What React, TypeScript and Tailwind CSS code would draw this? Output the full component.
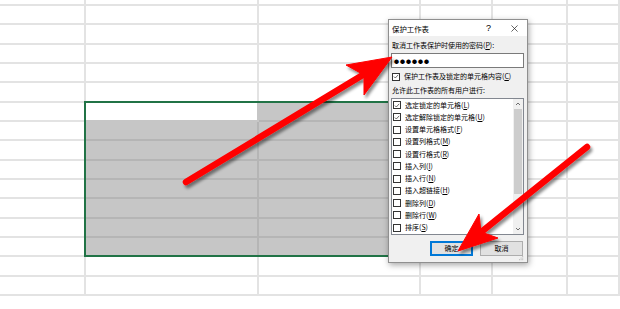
import React from "react";

const COL_W = ["w-[86px]", "w-[173px]", "w-[162px]", "w-[72px]", "w-[75px]", "flex-1"];

const OPTIONS: { label: string; k: string; on?: boolean }[] = [
  { label: "选定锁定的单元格", k: "L", on: true },
  { label: "选定解除锁定的单元格", k: "U", on: true },
  { label: "设置单元格格式", k: "F" },
  { label: "设置列格式", k: "M" },
  { label: "设置行格式", k: "R" },
  { label: "插入列", k: "I" },
  { label: "插入行", k: "N" },
  { label: "插入超链接", k: "H" },
  { label: "删除列", k: "D" },
  { label: "删除行", k: "W" },
  { label: "排序", k: "S" },
];

function Acc({ label, k, tail = "" }: { label: string; k: string; tail?: string }) {
  return (
    <span className="whitespace-nowrap">
      {label}(<span className="underline">{k}</span>){tail}
    </span>
  );
}

function Check({ on }: { on?: boolean }) {
  return (
    <span className="flex h-[8px] w-[8px] shrink-0 items-center justify-center border border-[#333] bg-white">
      {on && (
        <svg viewBox="0 0 8 8" className="h-[7px] w-[7px]">
          <path d="M1.2 4.1 L3.1 6 L6.9 1.8" fill="none" stroke="#222" strokeWidth="0.9" />
        </svg>
      )}
    </span>
  );
}

function Sheet() {
  const rows = Array.from({ length: 16 }, (_, r) => r);
  return (
    <div className="flex flex-col">
      {rows.map((r) => {
        const selRow = r >= 6 && r <= 13;
        return (
          <div key={r} className={`flex ${r === 0 ? "h-[6px]" : "h-[19.33px]"}`}>
            {COL_W.map((w, c) => {
              const sel = selRow && (c === 1 || c === 2);
              const active = sel && r === 6 && c === 1;
              let cls = "border-b-2 border-r-2 border-[#e3e3e3] bg-white";
              if (sel && !active) cls = "border-b-2 border-r-2 border-[#b5b5b5] bg-[#c6c6c6]";
              if (active) cls = "border-b-2 border-r-2 border-[#c6c6c6] bg-white";
              return <div key={c} className={`${w} shrink-0 ${cls}`} />;
            })}
          </div>
        );
      })}
    </div>
  );
}

function Dialog() {
  return (
    <div className="absolute left-[388px] top-[19px] flex h-[244px] w-[140px] flex-col border border-[#8f8f8f] bg-[#f0f0f0] font-['Noto_Sans_CJK_SC',sans-serif] text-[7px] leading-[9px] text-black shadow-[1px_2px_6px_rgba(0,0,0,0.35)]">
      {/* Title bar */}
      <div className="flex h-[18px] items-center bg-white pl-[3px] pr-[9px] text-[7.4px]">
        <span>保护工作表</span>
        <span className="ml-auto mr-[20px] font-['Liberation_Sans',sans-serif] text-[9px]">?</span>
        <svg viewBox="0 0 8 8" className="h-[7px] w-[7px]">
          <path d="M0.5 0.5 L7.5 7.5 M7.5 0.5 L0.5 7.5" stroke="#222" strokeWidth="0.8" />
        </svg>
      </div>

      {/* Body */}
      <div className="flex flex-1 flex-col pl-[2px] pr-[3px]">
        <div className="mt-[5px] pl-[1px]">
          <Acc label="取消工作表保护时使用的密码" k="P" tail=":" />
        </div>
        <div className="mt-[3px] flex h-[15px] items-center border border-[#7a7a7a] bg-white pl-[2px] text-[5px] tracking-[1px]">
          ●●●●●●
        </div>
        <div className="mt-[4px] flex items-center gap-[4px] pl-[1px]">
          <Check on />
          <Acc label="保护工作表及锁定的单元格内容" k="C" />
        </div>
        <div className="mt-[5px] pl-[1px]">允许此工作表的所有用户进行:</div>

        {/* List */}
        <div className="mt-[3px] flex h-[137px] border border-[#828790] bg-white">
          <div className="flex flex-1 flex-col">
            {OPTIONS.map((o) => (
              <div key={o.k} className="flex h-[12.25px] items-center gap-[4px] pl-[1px]">
                <Check on={o.on} />
                <Acc label={o.label} k={o.k} />
              </div>
            ))}
          </div>
          <div className="flex w-[10px] flex-col items-center bg-[#f0f0f0]">
            <svg viewBox="0 0 8 8" className="mt-[1px] h-[8px] w-[8px]">
              <path d="M2 5 L4 3 L6 5" fill="none" stroke="#606060" strokeWidth="0.9" />
            </svg>
            <div className="mt-[1px] h-[85px] w-[8px] bg-[#cdcdcd]" />
            <svg viewBox="0 0 8 8" className="mt-auto mb-[1px] h-[8px] w-[8px]">
              <path d="M2 3 L4 5 L6 3" fill="none" stroke="#606060" strokeWidth="0.9" />
            </svg>
          </div>
        </div>

        {/* Buttons */}
        <div className="mt-[6px] flex justify-end gap-[7px] pr-[1px]">
          <div className="flex h-[15px] w-[43px] items-center justify-center border border-[#0078d7] bg-[#e1e1e1] shadow-[inset_0_0_0_1px_#0078d7]">
            确定
          </div>
          <div className="flex h-[15px] w-[43px] items-center justify-center border border-[#adadad] bg-[#e1e1e1]">
            取消
          </div>
        </div>
        <svg viewBox="0 0 6 6" className="ml-auto mt-auto mb-[1px] h-[5px] w-[5px]">
          <rect x="4" y="0" width="1" height="1" fill="#a0a0a0" />
          <rect x="2" y="2" width="1" height="1" fill="#a0a0a0" />
          <rect x="4" y="2" width="1" height="1" fill="#a0a0a0" />
          <rect x="0" y="4" width="1" height="1" fill="#a0a0a0" />
          <rect x="2" y="4" width="1" height="1" fill="#a0a0a0" />
          <rect x="4" y="4" width="1" height="1" fill="#a0a0a0" />
        </svg>
      </div>
    </div>
  );
}

function Arrows() {
  return (
    <svg className="pointer-events-none absolute left-0 top-0 h-[309px] w-[620px]" viewBox="0 0 620 309">
      <defs>
        <filter id="sh" x="-20%" y="-20%" width="140%" height="140%">
          <feDropShadow dx="2" dy="3" stdDeviation="1.6" floodColor="#000" floodOpacity="0.45" />
        </filter>
      </defs>
      <g filter="url(#sh)" fill="#ff0000" stroke="#ff0000">
        <line x1="186" y1="182" x2="366" y2="73" strokeWidth="6.5" strokeLinecap="round" />
        <polygon points="392,57 346,65 364,75 364,95" strokeWidth="1" strokeLinejoin="round" />
        <line x1="587" y1="147" x2="480" y2="233" strokeWidth="6.5" strokeLinecap="round" />
        <polygon points="458,251 479,214 481,232 498,238" strokeWidth="1" strokeLinejoin="round" />
      </g>
    </svg>
  );
}

export default function App() {
  return (
    <div className="relative h-[309px] w-[620px] overflow-hidden bg-white">
      <Sheet />
      {/* selection outline */}
      <div className="absolute left-[84px] top-[101px] h-[156px] w-[337px] border-2 border-[#217346]" />
      <Dialog />
      <Arrows />
    </div>
  );
}
